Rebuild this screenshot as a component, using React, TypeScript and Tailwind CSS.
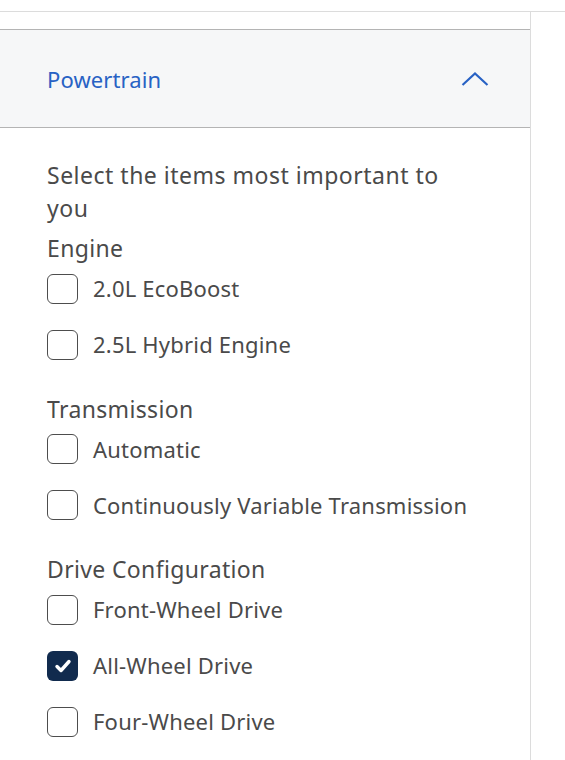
import React from 'react';

type Group = { label: string; items: { name: string; checked?: boolean }[] };

const groups: Group[] = [
  { label: 'Engine', items: [{ name: '2.0L EcoBoost' }, { name: '2.5L Hybrid Engine' }] },
  { label: 'Transmission', items: [{ name: 'Automatic' }, { name: 'Continuously Variable Transmission' }] },
  {
    label: 'Drive Configuration',
    items: [{ name: 'Front-Wheel Drive' }, { name: 'All-Wheel Drive', checked: true }, { name: 'Four-Wheel Drive' }],
  },
];

function Checkbox({ checked }: { checked?: boolean }) {
  if (checked) {
    return (
      <span className="w-[31px] h-[30px] rounded-[6px] bg-[#112b4e] flex items-center justify-center flex-shrink-0">
        <svg width="20" height="20" viewBox="0 0 20 20" fill="none">
          <path d="M4 10.5l4 4 8-9" stroke="white" strokeWidth="3.4" strokeLinecap="round" strokeLinejoin="round" />
        </svg>
      </span>
    );
  }
  return <span className="w-[31px] h-[30px] rounded-[6px] border-[1.5px] border-[#4d4d4d] bg-white flex-shrink-0" />;
}

export default function App() {
  return (
    <div className="w-full h-[760px] bg-white overflow-hidden font-['Noto_Sans',sans-serif] text-[#4a4a4a]">
      <div className="h-[11px]" />
      <div className="flex border-t border-[#dcdcdc] h-full">
        <div className="w-[531px] border-r border-[#dcdcdc] flex-shrink-0">
          <div className="h-[17px]" />
          {/* Accordion header */}
          <div className="h-[99px] bg-[#f6f7f8] border-y border-[#b4b4b4] flex items-center justify-between pl-[47px] pr-[41px]">
            <span className="text-[22px] text-[#2862c4] tracking-[0.1px] mt-[2px]">Powertrain</span>
            <svg width="28" height="16" viewBox="0 0 28 16" fill="none">
              <path d="M1.5 14L14 2.5 26.5 14" stroke="#2862c4" strokeWidth="2.2" />
            </svg>
          </div>

          {/* Content */}
          <div className="px-[47px] pt-[31px]">
            <p className="text-[23px] leading-[33px] tracking-[0.5px] max-w-[410px]">Select the items most important to you</p>
            <div className="flex flex-col gap-[33px] mt-[7px]">
              {groups.map((g) => (
                <div key={g.label}>
                  <div className="text-[23px] leading-[33px] tracking-[0.35px]">{g.label}</div>
                  <div className="flex flex-col gap-[26px] mt-[8.5px]">
                    {g.items.map((it) => (
                      <label key={it.name} className="flex items-center gap-[15px] h-[30px]">
                        <Checkbox checked={it.checked} />
                        <span className="text-[22px] tracking-[0.2px]">{it.name}</span>
                      </label>
                    ))}
                  </div>
                </div>
              ))}
            </div>
          </div>
        </div>
      </div>
    </div>
  );
}
